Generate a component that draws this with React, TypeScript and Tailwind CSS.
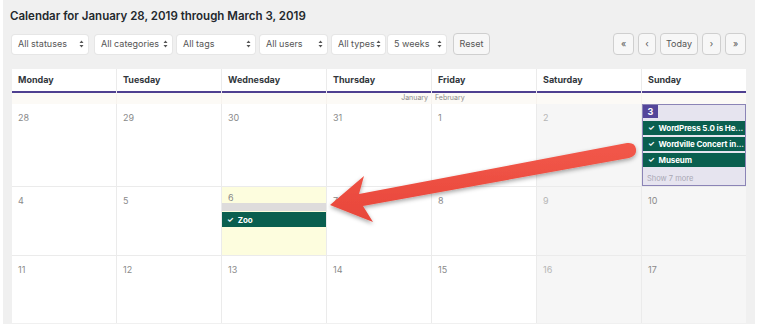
import React from 'react';

const FONT = { fontFamily: 'Inter, "Open Sans", "Liberation Sans", sans-serif' };

const DAYS = ['Monday', 'Tuesday', 'Wednesday', 'Thursday', 'Friday', 'Saturday', 'Sunday'];

const WEEKS = [
  ['28', '29', '30', '31', '1', '2', '3'],
  ['4', '5', '6', '7', '8', '9', '10'],
  ['11', '12', '13', '14', '15', '16', '17'],
];

const ROW_H = ['h-[82px]', 'h-[68px]', 'h-[67px]'];

const Arrows = () => (
  <svg width="5" height="8" viewBox="0 0 5 8" className="shrink-0">
    <path d="M2.5 0.5 L4.5 3 L0.5 3 Z M2.5 7.5 L4.5 5 L0.5 5 Z" fill="#555" />
  </svg>
);

const Filter = ({ label, w }: { label: string; w: string }) => (
  <div
    className={`${w} h-[19px] bg-white rounded-[3px] flex items-center justify-between pl-[6px] pr-[4px] text-[9px] text-[#555] shadow-[0_0_0_1px_#e6e6e6]`}
  >
    <span className="whitespace-nowrap">{label}</span>
    <Arrows />
  </div>
);

const NavBtn = ({ label, w }: { label: string; w: string }) => (
  <div
    className={`${w} h-[22px] flex items-center justify-center rounded-[4px] border border-[#cfcfcf] bg-[#f7f7f7] text-[9px] text-[#555]`}
  >
    {label}
  </div>
);

const Event = ({ title }: { title: string }) => (
  <div className="h-[14px] bg-[#0a5f4f] text-white text-[8px] font-bold flex items-center pl-[5px] whitespace-nowrap overflow-hidden tracking-[-0.1px]">
    <span className="mr-[4px] text-[7.5px]">✓</span>
    {title}
  </div>
);

function Cell({ day, col, row }: { day: string; col: number; row: number }) {
  const weekend = col >= 5;
  const past = col === 5;
  if (row === 0 && col === 6) {
    return (
      <div className="h-[82px] bg-[#e6e4ef] border border-[#8b84b6] flex flex-col">
        <div className="h-[13px] flex">
          <div className="w-[15px] h-[13px] bg-[#54469a] text-white text-[9px] font-bold flex items-center justify-center">
            3
          </div>
        </div>
        <div className="flex flex-col gap-[2px] mt-[3px]">
          <Event title="WordPress 5.0 is He..." />
          <Event title="Wordville Concert in..." />
          <Event title="Museum" />
        </div>
        <div className="text-[7.5px] text-[#a9a7b4] pl-[4px] mt-[6px]">Show 7 more</div>
      </div>
    );
  }
  if (row === 1 && col === 2) {
    return (
      <div className="h-[68px] bg-[#fdfdde] flex flex-col">
        <div className="text-[9px] text-[#888] pl-[6px] pt-[4px] h-[16px]">{day}</div>
        <div className="h-[8px] bg-[#dedcdc]" />
        <div className="mt-[1px]">
          <div className="h-[15px] bg-[#0a5f4f] text-white text-[8px] font-bold flex items-center pl-[5px]">
            <span className="mr-[4px] text-[7.5px]">✓</span>Zoo
          </div>
        </div>
      </div>
    );
  }
  return (
    <div className={`${ROW_H[row]} ${weekend ? 'bg-[#f6f6f6]' : 'bg-white'}`}>
      <div className={`text-[9px] pl-[6px] pt-[7px] ${past ? 'text-[#b5b5b5]' : 'text-[#8a8a8a]'}`}>{day}</div>
    </div>
  );
}

export default function App() {
  return (
    <div className="w-[762px] h-[330px] bg-white pl-[3px] pr-[7px] relative overflow-hidden" style={FONT}>
      <div className="h-[324px] bg-[#f0f0f0] px-[9px]">
        <div className="pt-[8px] h-[33px] text-[11.5px] font-semibold text-[#23282d] -ml-[2px]">
          Calendar for January 28, 2019 through March 3, 2019
        </div>
        <div className="flex items-center h-[22px]">
          <Filter label="All statuses" w="w-[76px]" />
          <div className="w-[7px]" />
          <Filter label="All categories" w="w-[77px]" />
          <div className="w-[5px]" />
          <Filter label="All tags" w="w-[78px]" />
          <div className="w-[5px]" />
          <Filter label="All users" w="w-[67px]" />
          <div className="w-[5px]" />
          <Filter label="All types" w="w-[53px]" />
          <div className="w-[3px]" />
          <Filter label="5 weeks" w="w-[58px]" />
          <div className="w-[7px]" />
          <NavBtn label="Reset" w="w-[37px]" />
          <div className="flex-1" />
          <div className="flex gap-[4px]">
            <NavBtn label="«" w="w-[21px]" />
            <NavBtn label="‹" w="w-[18px]" />
            <NavBtn label="Today" w="w-[38px]" />
            <NavBtn label="›" w="w-[19px]" />
            <NavBtn label="»" w="w-[21px]" />
          </div>
        </div>
        <div className="mt-[14px] bg-[#ebebeb]">
          <div className="grid grid-cols-7 gap-x-px">
            {DAYS.map((d) => (
              <div key={d} className="h-[24px] bg-white border-b-2 border-[#4f4090] flex items-center pl-[6px] text-[9px] font-bold text-[#32373c]">
                {d}
              </div>
            ))}
          </div>
          <div className="grid grid-cols-7 gap-x-px bg-[#f7f3ee]">
            {DAYS.map((d, i) => (
              <div
                key={d}
                className={`h-[11px] bg-[#fcfaf6] text-[7px] text-[#888] flex items-center px-[3px] ${i === 3 ? 'justify-end' : ''}`}
              >
                {i === 3 ? 'January' : i === 4 ? 'February' : ''}
              </div>
            ))}
          </div>
          <div className="flex flex-col gap-y-px">
            {WEEKS.map((w, r) => (
              <div key={r} className="grid grid-cols-7 gap-x-px">
                {w.map((d, c) => (
                  <Cell key={d} day={d} col={c} row={r} />
                ))}
              </div>
            ))}
          </div>
        </div>
      </div>
      <svg className="absolute left-0 top-0 pointer-events-none" width="762" height="330" viewBox="0 0 762 330">
        <defs>
          <filter id="sh" x="-10%" y="-30%" width="120%" height="160%">
            <feDropShadow dx="0" dy="2" stdDeviation="2" floodColor="#000" floodOpacity="0.35" />
          </filter>
          <linearGradient id="rg" x1="0" y1="0" x2="0" y2="1">
            <stop offset="0" stopColor="#f2584a" />
            <stop offset="1" stopColor="#e8463a" />
          </linearGradient>
        </defs>
        <g filter="url(#sh)" fill="url(#rg)">
          <path d="M330 205 L364 176 L359 194 L627 143 Q635 142 636 149 Q637 156 629 158 L363 206 L373 222 Z" strokeLinejoin="round" />
        </g>
      </svg>
    </div>
  );
}
